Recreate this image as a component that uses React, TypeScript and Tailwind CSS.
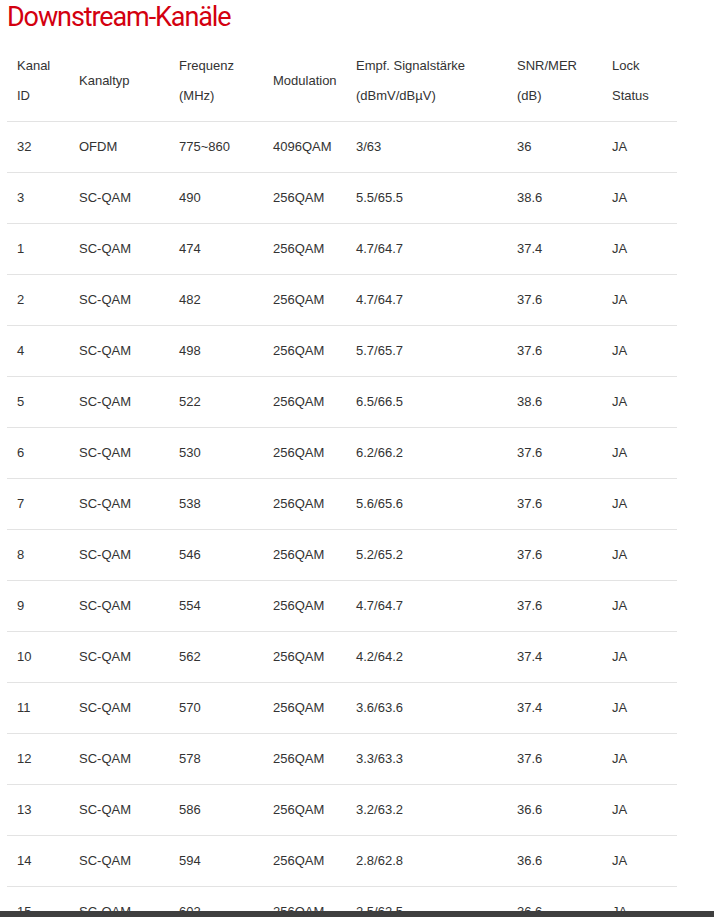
const columns = [
  { lines: ['Kanal', 'ID'], width: 'w-[62px]' },
  { lines: ['Kanaltyp'], width: 'w-[100px]' },
  { lines: ['Frequenz', '(MHz)'], width: 'w-[94px]' },
  { lines: ['Modulation'], width: 'w-[83px]' },
  { lines: ['Empf. Signalstärke', '(dBmV/dBµV)'], width: 'w-[161px]' },
  { lines: ['SNR/MER', '(dB)'], width: 'w-[95px]' },
  { lines: ['Lock', 'Status'], width: 'w-[75px]' },
];

const rows = [
  ['32', 'OFDM', '775~860', '4096QAM', '3/63', '36', 'JA'],
  ['3', 'SC-QAM', '490', '256QAM', '5.5/65.5', '38.6', 'JA'],
  ['1', 'SC-QAM', '474', '256QAM', '4.7/64.7', '37.4', 'JA'],
  ['2', 'SC-QAM', '482', '256QAM', '4.7/64.7', '37.6', 'JA'],
  ['4', 'SC-QAM', '498', '256QAM', '5.7/65.7', '37.6', 'JA'],
  ['5', 'SC-QAM', '522', '256QAM', '6.5/66.5', '38.6', 'JA'],
  ['6', 'SC-QAM', '530', '256QAM', '6.2/66.2', '37.6', 'JA'],
  ['7', 'SC-QAM', '538', '256QAM', '5.6/65.6', '37.6', 'JA'],
  ['8', 'SC-QAM', '546', '256QAM', '5.2/65.2', '37.6', 'JA'],
  ['9', 'SC-QAM', '554', '256QAM', '4.7/64.7', '37.6', 'JA'],
  ['10', 'SC-QAM', '562', '256QAM', '4.2/64.2', '37.4', 'JA'],
  ['11', 'SC-QAM', '570', '256QAM', '3.6/63.6', '37.4', 'JA'],
  ['12', 'SC-QAM', '578', '256QAM', '3.3/63.3', '37.6', 'JA'],
  ['13', 'SC-QAM', '586', '256QAM', '3.2/63.2', '36.6', 'JA'],
  ['14', 'SC-QAM', '594', '256QAM', '2.8/62.8', '36.6', 'JA'],
  ['15', 'SC-QAM', '602', '256QAM', '2.5/62.5', '36.6', 'JA'],
];

export default function App() {
  return (
    <div className="min-h-screen bg-white font-['Liberation_Sans',Arial,sans-serif] text-[13px] text-[#333]">
      <h1 className="h-[41px] pl-[7px] pt-[1px] font-['Roboto',sans-serif] text-[27px] leading-[32px] tracking-[-1.1px] text-[#d3000f]">
        Downstream-Kanäle
      </h1>

      <table className="ml-[7px] w-[670px] table-fixed border-collapse">
        <thead>
          <tr className="border-b border-[#e3e3e3]">
            {columns.map((col) => (
              <th
                key={col.lines[0]}
                className={`${col.width} p-[10px] text-left align-middle font-normal leading-[30px]`}
              >
                {col.lines.map((l) => (
                  <div key={l}>{l}</div>
                ))}
              </th>
            ))}
          </tr>
        </thead>
        <tbody>
          {rows.map((row) => (
            <tr key={row[0]} className="border-b border-[#e3e3e3]">
              {row.map((cell, i) => (
                <td key={i} className="p-[10px] leading-[30px]">
                  {cell}
                </td>
              ))}
            </tr>
          ))}
        </tbody>
      </table>

      {/* bottom bar overlays the table */}
      <div className="fixed bottom-0 left-0 right-0 h-[6px] bg-[#3f3f3f]" />
    </div>
  );
}
